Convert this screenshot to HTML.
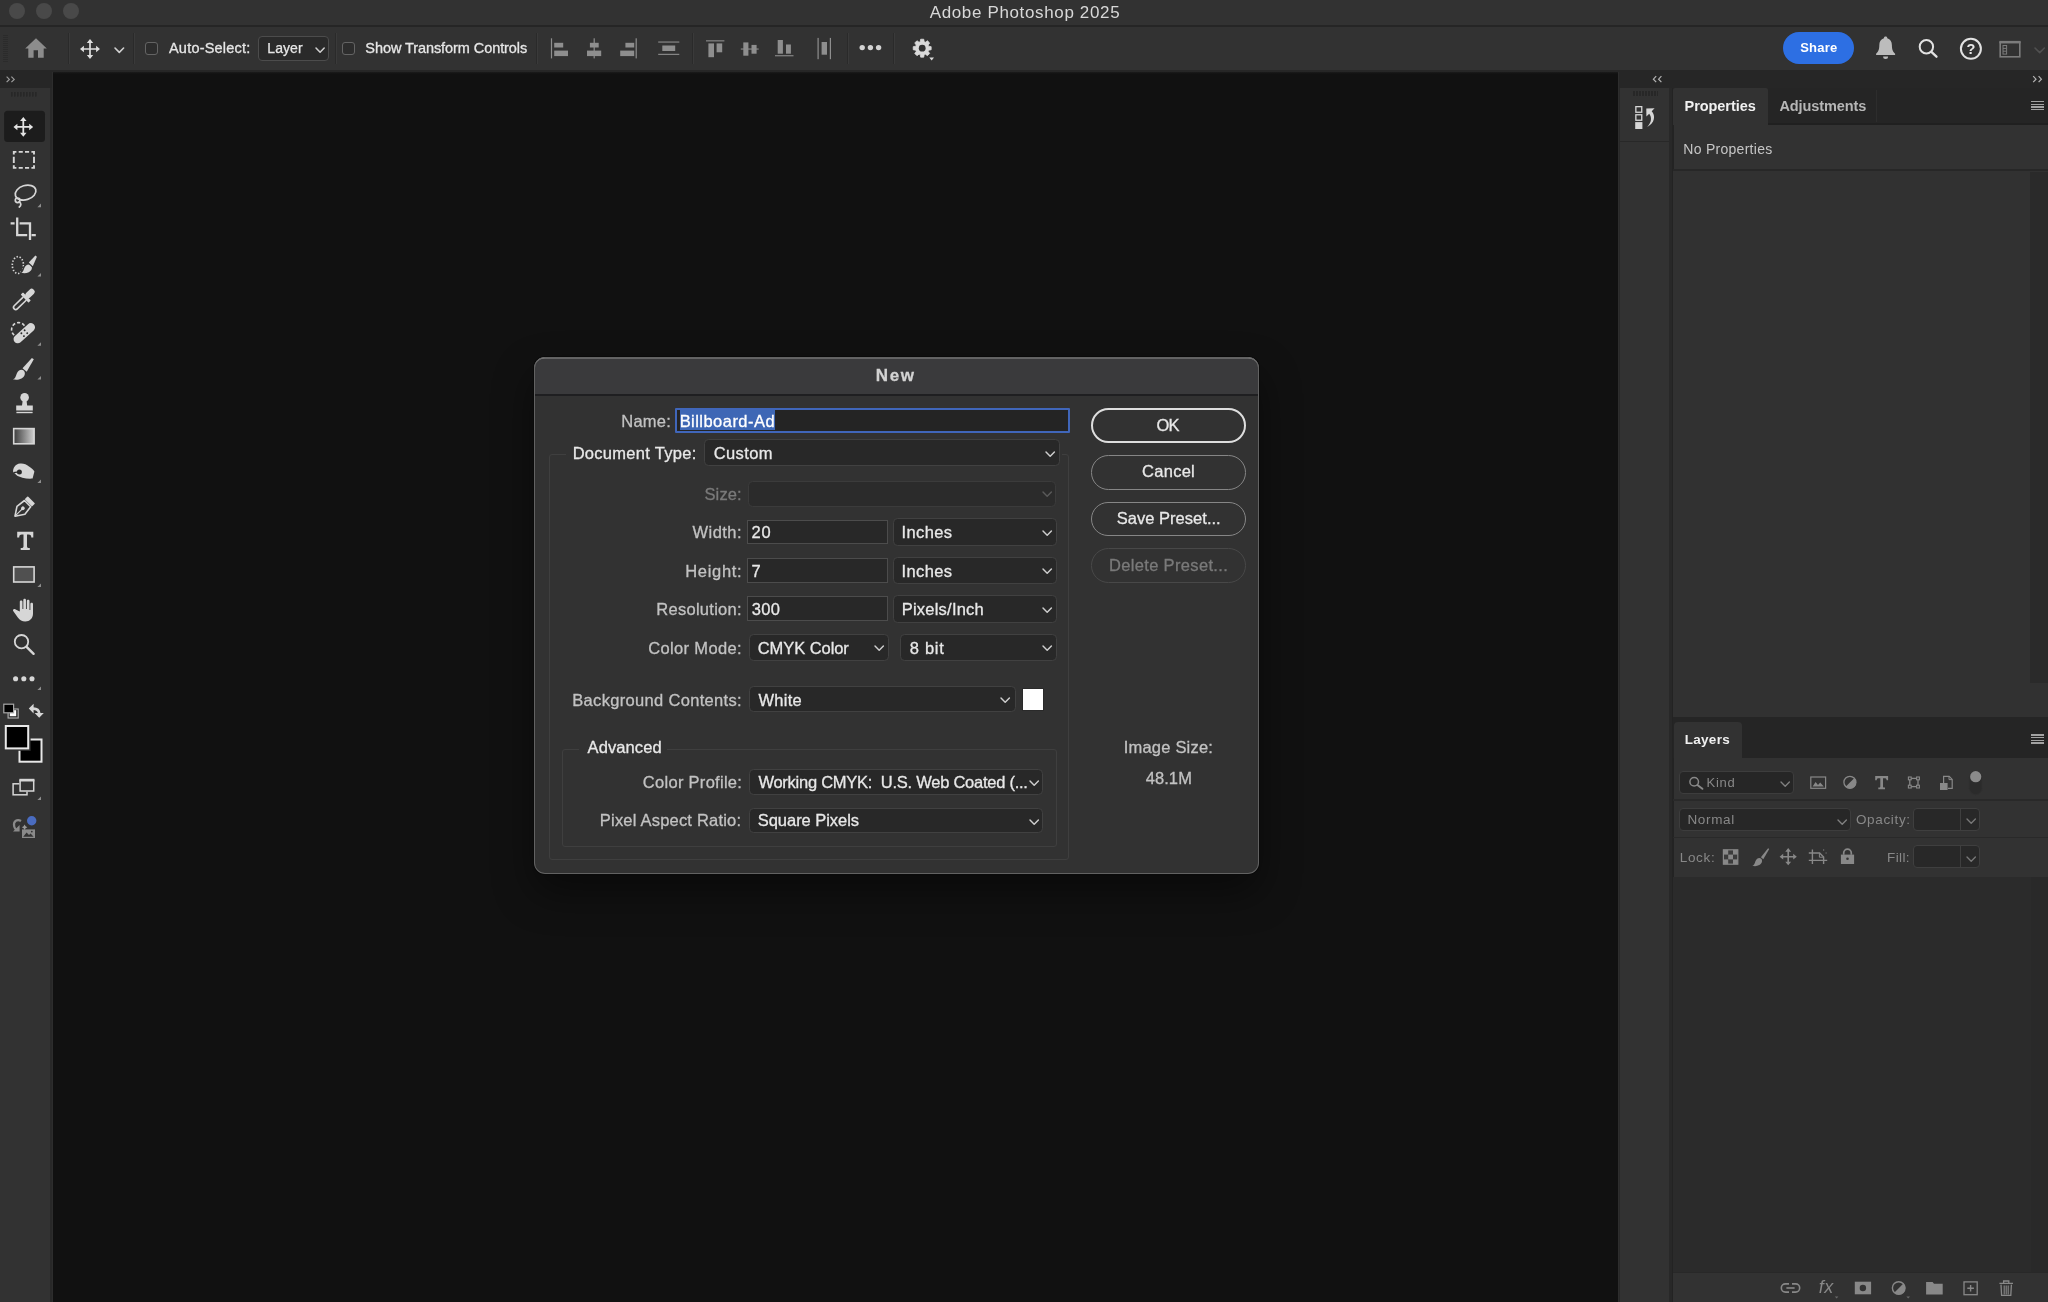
<!DOCTYPE html>
<html>
<head>
<meta charset="utf-8">
<title>Adobe Photoshop 2025</title>
<style>
*{box-sizing:border-box;margin:0;padding:0}
html,body{width:2048px;height:1302px;overflow:hidden;background:#111111;font-family:"Liberation Sans",sans-serif;}
.a{position:absolute}
.t{position:absolute;white-space:pre}
svg{position:absolute;overflow:visible}
#txt{position:absolute;left:0;top:0;width:2048px;height:1302px;will-change:transform}
#app{position:absolute;left:0;top:0;width:2048px;height:1302px;overflow:hidden;background:#111111}
</style>
</head>
<body>
<div id="app">
<div class="a" style="left:0px;top:0px;width:2048.00px;height:24.60px;background:#323232;"></div>
<div class="a" style="left:0px;top:24.6px;width:2048.00px;height:2.00px;background:#252525;"></div>
<div class="a" style="left:0px;top:26.6px;width:2048.00px;height:43.40px;background:#323232;"></div>
<div class="a" style="left:0px;top:70px;width:2048.00px;height:2.00px;background:#262626;"></div>
<div class="a" style="left:9px;top:2.5px;width:16.00px;height:16.00px;background:#494949;border-radius:8px;"></div>
<div class="a" style="left:36px;top:2.5px;width:16.00px;height:16.00px;background:#494949;border-radius:8px;"></div>
<div class="a" style="left:62.5px;top:2.5px;width:16.00px;height:16.00px;background:#494949;border-radius:8px;"></div>
<div class="a" style="left:53px;top:72px;width:1564.70px;height:1.50px;background:linear-gradient(#1b1b1b,#111111);"></div>
<div class="a" style="left:0px;top:72px;width:51.80px;height:16.00px;background:#262626;"></div>
<div class="a" style="left:0px;top:88px;width:49.80px;height:1214.00px;background:#323232;"></div>
<div class="a" style="left:49.8px;top:88px;width:2.00px;height:1214.00px;background:#282828;"></div>
<div class="a" style="left:51.8px;top:72px;width:1.20px;height:1230.00px;background:#2d2d2d;"></div>
<div class="a" style="left:1617.7px;top:72px;width:1.30px;height:1230.00px;background:#2d2d2d;"></div>
<div class="a" style="left:1619px;top:72px;width:429.00px;height:16.00px;background:#262626;"></div>
<div class="a" style="left:1619px;top:88px;width:1.30px;height:1214.00px;background:#282828;"></div>
<div class="a" style="left:1620.3px;top:88px;width:48.70px;height:1214.00px;background:#323232;"></div>
<div class="a" style="left:1669px;top:88px;width:4.60px;height:1214.00px;background:#282828;"></div>
<div class="a" style="left:1672px;top:88px;width:1.50px;height:1214.00px;background:#232323;"></div>
<div class="a" style="left:1673.5px;top:88px;width:374.50px;height:1214.00px;background:#323232;"></div>
<div class="a" style="left:3px;top:35px;width:5px;height:28px;background:repeating-linear-gradient(to bottom,#2a2a2a 0,#2a2a2a 1px,transparent 1px,transparent 2px);opacity:.9"></div>
<div class="a" style="left:68px;top:33px;width:1.00px;height:31.00px;background:#2a2a2a;"></div>
<div class="a" style="left:69px;top:33px;width:1.00px;height:31.00px;background:#3a3a3a;"></div>
<div class="a" style="left:132.5px;top:33px;width:1.00px;height:31.00px;background:#2a2a2a;"></div>
<div class="a" style="left:133.5px;top:33px;width:1.00px;height:31.00px;background:#3a3a3a;"></div>
<div class="a" style="left:335px;top:33px;width:1.00px;height:31.00px;background:#2a2a2a;"></div>
<div class="a" style="left:336px;top:33px;width:1.00px;height:31.00px;background:#3a3a3a;"></div>
<div class="a" style="left:536px;top:33px;width:1.00px;height:31.00px;background:#2a2a2a;"></div>
<div class="a" style="left:537px;top:33px;width:1.00px;height:31.00px;background:#3a3a3a;"></div>
<div class="a" style="left:691.5px;top:33px;width:1.00px;height:31.00px;background:#2a2a2a;"></div>
<div class="a" style="left:692.5px;top:33px;width:1.00px;height:31.00px;background:#3a3a3a;"></div>
<div class="a" style="left:846.5px;top:33px;width:1.00px;height:31.00px;background:#2a2a2a;"></div>
<div class="a" style="left:847.5px;top:33px;width:1.00px;height:31.00px;background:#3a3a3a;"></div>
<div class="a" style="left:893px;top:33px;width:1.00px;height:31.00px;background:#2a2a2a;"></div>
<div class="a" style="left:894px;top:33px;width:1.00px;height:31.00px;background:#3a3a3a;"></div>
<svg style="left:24px;top:37px;" width="24" height="22" viewBox="0 0 24 22"><path d="M12 1.3 L1.2 11.6 H4.3 V20.8 H9.6 V13.3 H14 V20.8 H19.7 V11.6 H22.8 Z" fill="#8c8c8c"/></svg>
<svg style="left:79.7px;top:38.5px;" width="20" height="20" viewBox="0 0 20 20"><g fill="none" stroke="#dedede" stroke-width="1.7" stroke-linecap="butt"><path d="M10 2.5 V17.5 M2.5 10 H17.5"/></g><path d="M10 0 L13.2 3.9 H6.8 Z M10 20 L13.2 16.1 H6.8 Z M0 10 L3.9 6.8 V13.2 Z M20 10 L16.1 6.8 V13.2 Z" fill="#dedede"/></svg>
<svg style="left:112.9px;top:46.1px;" width="12.6" height="8.4" viewBox="0 0 12.6 8.4"><path d="M2 2 L6.3 6.4 L10.6 2" fill="none" stroke="#d0d0d0" stroke-width="1.6" stroke-linecap="round" stroke-linejoin="round"/></svg>
<div class="a" style="left:144.8px;top:42px;width:13.30px;height:12.80px;background:#2d2d2d;border:1.4px solid #646464;border-radius:3px;"></div>
<div class="a" style="left:341.9px;top:42px;width:13.30px;height:12.80px;background:#2d2d2d;border:1.4px solid #646464;border-radius:3px;"></div>
<div class="a" style="left:257.6px;top:35.8px;width:71.80px;height:25.20px;background:#2a2a2a;border:1px solid #4c4c4c;border-radius:4px;"></div>
<svg style="left:313.6px;top:45.7px;" width="12.2" height="8.2" viewBox="0 0 12.2 8.2"><path d="M2 2 L6.1 6.2 L10.2 2" fill="none" stroke="#d0d0d0" stroke-width="1.5" stroke-linecap="round" stroke-linejoin="round"/></svg>
<svg style="left:0px;top:0px;" width="2048" height="72" viewBox="0 0 2048 72"><rect x="550.9" y="38.3" width="1.2" height="20.1" fill="#8e8e8e"/><rect x="554.2" y="42.8" width="9.0" height="4.7" fill="#8e8e8e"/><rect x="554.2" y="50.6" width="13.8" height="5.5" fill="#8e8e8e"/><rect x="593.6" y="38.3" width="1.2" height="20.1" fill="#8e8e8e"/><rect x="589.9" y="42.8" width="8.8" height="4.7" fill="#8e8e8e"/><rect x="587.0" y="50.6" width="14.2" height="5.5" fill="#8e8e8e"/><rect x="635.6" y="38.3" width="1.2" height="20.1" fill="#8e8e8e"/><rect x="625.4" y="42.8" width="8.8" height="4.7" fill="#8e8e8e"/><rect x="620.2" y="50.6" width="14.0" height="5.5" fill="#8e8e8e"/><rect x="658.2" y="41.5" width="21.1" height="1.1" fill="#8e8e8e"/><rect x="658.2" y="53.8" width="21.1" height="1.1" fill="#8e8e8e"/><rect x="662.3" y="45.5" width="12.9" height="5.5" fill="#8e8e8e"/><rect x="706.0" y="40.3" width="18.4" height="1.1" fill="#8e8e8e"/><rect x="708.4" y="43.4" width="5.6" height="13.8" fill="#8e8e8e"/><rect x="716.6" y="43.4" width="5.6" height="8.9" fill="#8e8e8e"/><rect x="740.8" y="48.5" width="17.9" height="1.1" fill="#8e8e8e"/><rect x="743.3" y="42.4" width="5.1" height="13.3" fill="#8e8e8e"/><rect x="751.5" y="44.9" width="5.1" height="8.8" fill="#8e8e8e"/><rect x="775.0" y="55.2" width="18.5" height="1.1" fill="#8e8e8e"/><rect x="777.7" y="40.0" width="5.2" height="13.7" fill="#8e8e8e"/><rect x="786.0" y="44.5" width="4.9" height="9.2" fill="#8e8e8e"/><rect x="817.5" y="37.9" width="1.2" height="21.3" fill="#8e8e8e"/><rect x="829.8" y="37.9" width="1.2" height="21.3" fill="#8e8e8e"/><rect x="821.6" y="42.0" width="5.4" height="12.7" fill="#8e8e8e"/></svg>
<svg style="left:0px;top:0px;" width="2048" height="72" viewBox="0 0 2048 72"><circle cx="862.2" cy="47.6" r="2.7" fill="#d2d2d2"/><circle cx="870.4" cy="47.6" r="2.7" fill="#d2d2d2"/><circle cx="878.6" cy="47.6" r="2.7" fill="#d2d2d2"/></svg>
<svg style="left:0px;top:0px;" width="2048" height="72" viewBox="0 0 2048 72"><path d="M920.66 39.23 L923.74 39.23 L924.18 41.80 L925.33 42.27 L927.45 40.77 L929.63 42.95 L928.13 45.07 L928.60 46.22 L931.17 46.66 L931.17 49.74 L928.60 50.18 L928.13 51.33 L929.63 53.45 L927.45 55.63 L925.33 54.13 L924.18 54.60 L923.74 57.17 L920.66 57.17 L920.22 54.60 L919.07 54.13 L916.95 55.63 L914.77 53.45 L916.27 51.33 L915.80 50.18 L913.23 49.74 L913.23 46.66 L915.80 46.22 L916.27 45.07 L914.77 42.95 L916.95 40.77 L919.07 42.27 L920.22 41.80 Z" fill="#dadada" stroke="#dadada" stroke-width="0.8" stroke-linejoin="round"/><circle cx="922.2" cy="48.2" r="3.4" fill="#323232"/><path d="M929.3 57.6 H934 L931.65 60.4 Z" fill="#dadada"/></svg>
<div class="a" style="left:1782.9px;top:32.2px;width:71.40px;height:31.80px;background:#2d6fe3;border-radius:16px;"></div>
<svg style="left:1874px;top:35px;" width="24" height="27" viewBox="0 0 24 27"><path d="M11.6 1.6 c1 0 1.7 .7 1.7 1.7 c3 .9 4.6 3.6 4.6 7 c0 4.6 1.2 6.6 3.2 8.4 v1.3 H2.1 v-1.3 c2-1.8 3.2-3.8 3.2-8.4 c0-3.4 1.6-6.1 4.6-7 c0-1 .7-1.7 1.7-1.7 Z" fill="#bcbcbc"/><path d="M9.1 21.6 h5 a2.5 2.5 0 0 1 -5 0 Z" fill="#bcbcbc"/></svg>
<svg style="left:1915px;top:36px;" width="26" height="26" viewBox="0 0 26 26"><circle cx="11.4" cy="10.8" r="6.7" fill="none" stroke="#e2e2e2" stroke-width="2"/><path d="M16.4 15.9 L21.5 20.7" stroke="#e2e2e2" stroke-width="2.3" stroke-linecap="round"/></svg>
<svg style="left:1958px;top:36px;" width="26" height="26" viewBox="0 0 26 26"><circle cx="12.9" cy="12.8" r="10" fill="none" stroke="#e2e2e2" stroke-width="2"/></svg>
<svg style="left:1998px;top:39px;" width="26" height="22" viewBox="0 0 26 22"><rect x="2.2" y="3.4" width="19.6" height="14.4" fill="none" stroke="#7c7c7c" stroke-width="1.6"/><rect x="1.4" y="1.9" width="21.2" height="2.4" fill="#7c7c7c"/><rect x="5" y="6.5" width="3.6" height="8.6" fill="none" stroke="#7c7c7c" stroke-width="1"/><path d="M5 9.4h3.6M5 12.2h3.6" stroke="#7c7c7c" stroke-width="1"/></svg>
<svg style="left:2032.5px;top:45.9px;" width="13.4" height="8.6" viewBox="0 0 13.4 8.6"><path d="M2 2 L6.7 6.6 L11.4 2" fill="none" stroke="#505050" stroke-width="1.6" stroke-linecap="round" stroke-linejoin="round"/></svg>
<svg style="left:0px;top:0px;" width="54" height="900" viewBox="0 0 54 900"><path d="M6.6 76.6 L9.4 79.4 L6.6 82.2 M11.4 76.6 L14.2 79.4 L11.4 82.2" fill="none" stroke="#9c9c9c" stroke-width="1.2"/><rect x="11" y="92" width="1.6" height="4.6" fill="#272727"/><rect x="14" y="92" width="1.6" height="4.6" fill="#272727"/><rect x="17" y="92" width="1.6" height="4.6" fill="#272727"/><rect x="20" y="92" width="1.6" height="4.6" fill="#272727"/><rect x="23" y="92" width="1.6" height="4.6" fill="#272727"/><rect x="26" y="92" width="1.6" height="4.6" fill="#272727"/><rect x="29" y="92" width="1.6" height="4.6" fill="#272727"/><rect x="32" y="92" width="1.6" height="4.6" fill="#272727"/><rect x="35" y="92" width="1.6" height="4.6" fill="#272727"/><rect x="4.1" y="110.7" width="40.9" height="31.2" rx="3.5" fill="#1c1c1c"/><g transform="translate(13.450000000000001,117.05000000000001) scale(0.985)"><path d="M10 2.5 V17.5 M2.5 10 H17.5" fill="none" stroke="#e4e4e4" stroke-width="1.8"/><path d="M10 0 L13.3 4 H6.7 Z M10 20 L13.3 16 H6.7 Z M0 10 L4 6.7 V13.3 Z M20 10 L16 6.7 V13.3 Z" fill="#e4e4e4"/></g><path d="M16.400000000000002 151.9 H13.8 V154.5 M31.4 151.9 H34.0 V154.5 M16.400000000000002 167.9 H13.8 V165.3 M31.4 167.9 H34.0 V165.3 M18.700000000000003 151.9 H22.8 M25.0 151.9 H29.1 M18.700000000000003 167.9 H22.8 M25.0 167.9 H29.1 M13.8 156.8 V163.0 M34.0 156.8 V163.0 " fill="none" stroke="#d6d6d6" stroke-width="1.9"/><g fill="none" stroke="#d6d6d6" stroke-width="1.7" stroke-linecap="round"><ellipse cx="25.6" cy="192.6" rx="10.6" ry="7.1" transform="rotate(-17 25.6 192.6)"/><circle cx="17.6" cy="200.3" r="2.3"/><path d="M19.4 201.8 C21.3 203.3 21.3 205.6 19.3 207"/></g><path d="M41 203.6 V207.2 H37.4 Z" fill="#8e8e8e"/><path d="M17.2 217.6 V235.2 H27.2 M31.6 235.2 H35.8 M10.6 223.4 H14.6 M19.6 223.4 H30 V240" fill="none" stroke="#d6d6d6" stroke-width="2.3"/><ellipse cx="17.9" cy="265.1" rx="5.6" ry="8.4" fill="none" stroke="#d6d6d6" stroke-width="1.7" stroke-dasharray="1.4 1.75"/><g transform="translate(21.2 272.8)"><path d="M0 0 C1.6 -0.4 2.2 -2.2 3 -4.6 C4.2 -7.8 7.4 -9.4 9.6 -7.6 C11.8 -5.4 10.6 -2.2 7.6 -0.6 C5 0.7 2.2 0.5 0 0 Z" fill="#323232" stroke="#323232" stroke-width="3"/><path d="M0 0 C1.6 -0.4 2.2 -2.2 3 -4.6 C4.2 -7.8 7.4 -9.4 9.6 -7.6 C11.8 -5.4 10.6 -2.2 7.6 -0.6 C5 0.7 2.2 0.5 0 0 Z" fill="#d6d6d6"/><path d="M7.8 -10 L14.2 -17.2 L15.6 -16 L11.4 -6.8 Z" fill="#323232" stroke="#323232" stroke-width="2.4"/><path d="M7.6 -10.2 L14.2 -17.4 L15.7 -16.1 L11.6 -6.6 Z" fill="#d6d6d6"/></g><path d="M41 273 V276.6 H37.4 Z" fill="#8e8e8e"/><g transform="translate(14.2 308.9) rotate(-44.5)"><path d="M15 -2.2 H2.2 A2.2 2.2 0 0 0 2.2 2.2 H15" fill="none" stroke="#d6d6d6" stroke-width="1.6"/><rect x="14.6" y="-5.6" width="3.2" height="11.2" rx="0.6" fill="#d6d6d6"/><rect x="17" y="-3" width="10.4" height="6" rx="2.6" fill="#d6d6d6"/></g><circle cx="18.6" cy="329.6" r="7" fill="none" stroke="#d6d6d6" stroke-width="1.6" stroke-dasharray="3.2 2"/><g transform="translate(24.3 333.2) rotate(-42)"><rect x="-14" y="-5.2" width="28" height="10.4" rx="5.2" fill="#323232"/><rect x="-13" y="-4.2" width="26" height="8.4" rx="4.2" fill="#d6d6d6"/><circle cx="-2.2" cy="-1.9" r="0.95" fill="#2a2a2a"/><circle cx="-2.2" cy="1.9" r="0.95" fill="#2a2a2a"/><circle cx="2.2" cy="-1.9" r="0.95" fill="#2a2a2a"/><circle cx="2.2" cy="1.9" r="0.95" fill="#2a2a2a"/></g><path d="M41 342.2 V345.8 H37.4 Z" fill="#8e8e8e"/><g transform="translate(12.9 379.3)"><path d="M0 0 C2.2 -0.4 2.8 -2.8 3.8 -5.6 C5.2 -9.4 8.8 -10.8 11 -8.6 C13 -6.2 11.8 -2.4 8.6 -0.8 C5.6 0.7 2.4 0.6 0 0 Z" fill="#d6d6d6"/><path d="M9.6 -11 L19 -21.4 L20.9 -20 L13.8 -7.6 Z" fill="#d6d6d6"/></g><path d="M41 376 V379.6 H37.4 Z" fill="#8e8e8e"/><circle cx="24.6" cy="397.4" r="4.3" fill="#d6d6d6"/><path d="M22.7 400.6 H26.5 L27.2 405.4 H32.8 V410.4 H16.2 V405.4 H22 Z" fill="#d6d6d6"/><rect x="16.4" y="411.8" width="16.2" height="1.4" fill="#d6d6d6"/><defs><linearGradient id="gr" x1="0" y1="0" x2="1" y2="0"><stop offset="0" stop-color="#3c3c3c"/><stop offset="1" stop-color="#d0d0d0"/></linearGradient></defs><rect x="13.7" y="428.6" width="20.4" height="15.2" fill="url(#gr)" stroke="#d6d6d6" stroke-width="1.6"/><path d="M13.2 472.4 C12.6 468 15.6 464 20 463.6 C23.6 463.2 26.4 464.6 29 466.4 C31.6 468.2 33.6 469.6 34.4 471.6 L32.6 478.6 C29 478.8 25.6 478.6 22.4 477.8 C18.6 476.8 16 475.4 15 473.6 Z" fill="#d6d6d6"/><circle cx="19.4" cy="471.9" r="2.5" fill="#2a2a2a"/><path d="M13.4 472.6 L17 472.2" stroke="#2a2a2a" stroke-width="1.2"/><path d="M41 479.4 V483.0 H37.4 Z" fill="#8e8e8e"/><g transform="translate(15 516.2) rotate(-45)"><path d="M0 0 L8.4 -5.6 L17.8 -4.4 V4.4 L8.4 5.6 Z" fill="none" stroke="#d6d6d6" stroke-width="1.6" stroke-linejoin="round"/><path d="M0 0 H10" stroke="#d6d6d6" stroke-width="1.2"/><circle cx="11.2" cy="0" r="1.8" fill="#d6d6d6"/><rect x="18.8" y="-5.2" width="4.4" height="10.4" rx="0.8" fill="#d6d6d6"/></g><path d="M17.2 531.8 H33.3 V537.4 H31.3 C31.2 535.6 30.6 534.6 28.6 534.6 H27 V546.2 C27 547.6 27.6 548 29.8 548 V550 H20.7 V548 C22.9 548 23.5 547.6 23.5 546.2 V534.6 H21.9 C19.9 534.6 19.3 535.6 19.2 537.4 H17.2 Z" fill="#d6d6d6"/><rect x="13.7" y="566.9" width="20.4" height="15.1" fill="#505050" stroke="#d6d6d6" stroke-width="1.6"/><path d="M41 583.4 V587.0 H37.4 Z" fill="#8e8e8e"/><path transform="translate(24.2 0) scale(1.1 1) translate(-23.6 0)" d="M19.6 611.6 V601.6 C19.6 600 22 600 22 601.6 V609 H22.8 V600 C22.8 598.4 25.2 598.4 25.2 600 V609 H26 V601 C26 599.4 28.4 599.4 28.4 601 V610 H29.2 V604 C29.2 602.4 31.6 602.4 31.6 604 V613.6 C31.6 618.4 28.6 621.6 24.6 621.6 C21.6 621.6 19.6 620.4 17.8 617.6 L13.6 611 C12.8 609.6 14.6 608.4 15.8 609.6 Z" fill="#d6d6d6"/><circle cx="21.5" cy="641.7" r="6.7" fill="none" stroke="#d6d6d6" stroke-width="1.8"/><path d="M26.6 646.8 L33.6 653.8" stroke="#d6d6d6" stroke-width="2.4" stroke-linecap="round"/><circle cx="15.6" cy="678.8" r="2.55" fill="#d6d6d6"/><circle cx="23.8" cy="678.8" r="2.55" fill="#d6d6d6"/><circle cx="32" cy="678.8" r="2.55" fill="#d6d6d6"/><path d="M41 686.4 V690.0 H37.4 Z" fill="#8e8e8e"/><rect x="8.1" y="709" width="10.1" height="9" fill="#2a2a2a" stroke="#a8a8a8" stroke-width="1.2"/><rect x="9.8" y="710.2" width="6.4" height="6" fill="#ffffff"/><rect x="3.8" y="704.2" width="9.8" height="8.6" fill="#000" stroke="#a8a8a8" stroke-width="1.2"/><path d="M32.4 708.6 C36.6 708.4 39 710 39.2 713.4" fill="none" stroke="#d6d6d6" stroke-width="2.6"/><path d="M28.8 708.6 L33.6 703.8 V713.4 Z M39.2 717.8 L34.6 713 H43.8 Z" fill="#d6d6d6"/><rect x="19.5" y="739.5" width="22" height="22.2" fill="#000" stroke="#e8e8e8" stroke-width="2"/><rect x="3.4" y="723.6" width="27.2" height="27.2" fill="#323232"/><rect x="5.8" y="726" width="22.4" height="22.4" fill="#000" stroke="#e8e8e8" stroke-width="2"/><rect x="13.1" y="783.8" width="13.9" height="11" fill="none" stroke="#d6d6d6" stroke-width="1.5"/><rect x="19.4" y="778.8" width="15" height="12.9" fill="#323232"/><rect x="20.1" y="780.4" width="13.6" height="10.6" fill="none" stroke="#d6d6d6" stroke-width="1.5"/><rect x="19.4" y="778.8" width="15" height="2.6" fill="#d6d6d6"/><path d="M41 796.4 V800.0 H37.4 Z" fill="#8e8e8e"/><path d="M21 821 C17 818.4 13 821.6 14.2 826.4 C14.6 828 15.4 829.2 16.6 830" fill="none" stroke="#8a8a8a" stroke-width="2.2"/><path d="M13 831.4 H19.6 V825 Z" fill="#8a8a8a"/><rect x="22" y="829.4" width="13" height="8.6" fill="#8a8a8a"/><path d="M23.2 836.8 L26.6 832.4 L29 835 L30.6 833.6 L33.6 836.8 Z" fill="#323232"/><circle cx="31.8" cy="831.6" r="0.9" fill="#323232"/><circle cx="31.7" cy="820.8" r="4.7" fill="#4a6cc0"/><path d="M24.6 824.4 l1 1.8 l1.8 1 l-1.8 1 l-1 1.8 l-1 -1.8 l-1.8 -1 l1.8 -1 Z" fill="#9a9a9a"/></svg>
<div class="a" style="left:1620.3px;top:141px;width:49.70px;height:1.20px;background:#282828;"></div>
<div class="a" style="left:1633px;top:91.4px;width:25px;height:4.8px;background:repeating-linear-gradient(to right,#272727 0,#272727 1.6px,transparent 1.6px,transparent 3px)"></div>
<svg style="left:0px;top:0px;" width="2048" height="200" viewBox="0 0 2048 200"><path d="M1656.2 76.2 L1653.4 79.2 L1656.2 82.2 M1661.4 76.2 L1658.6 79.2 L1661.4 82.2" fill="none" stroke="#b4b4b4" stroke-width="1.2"/><path d="M2033.2 76.2 L2036 79.2 L2033.2 82.2 M2038.6 76.2 L2041.4 79.2 L2038.6 82.2" fill="none" stroke="#b4b4b4" stroke-width="1.2"/><rect x="1635.85" y="106.65" width="5.9" height="5.6" fill="none" stroke="#d6d6d6" stroke-width="1.3"/><rect x="1635.85" y="114.75" width="5.9" height="5.5" fill="none" stroke="#d6d6d6" stroke-width="1.3"/><rect x="1635.2" y="122.1" width="7.2" height="6.9" fill="#d6d6d6"/><path d="M1646.3 108.4 L1654.6 108.3 L1651.7 111.2 C1655.8 115.6 1654.8 123 1647.2 126.9 C1651.4 122.6 1652.2 117.6 1649.2 113.7 L1646.4 116.5 Z" fill="#d6d6d6"/></svg>
<div class="a" style="left:1673px;top:88px;width:375.00px;height:35.00px;background:#252525;"></div>
<div class="a" style="left:1673px;top:123px;width:375.00px;height:2.00px;background:#202020;"></div>
<div class="a" style="left:1673.3px;top:88px;width:94.90px;height:37.00px;background:#323232;border-radius:2px 2px 0 0;"></div>
<div class="a" style="left:1876.2px;top:90px;width:0.80px;height:32.00px;background:#2d2d2d;"></div>
<div class="a" style="left:2030.5px;top:101.0px;width:13.80px;height:1.25px;background:#a2a2a2;"></div>
<div class="a" style="left:2030.5px;top:103.67px;width:13.80px;height:1.25px;background:#a2a2a2;"></div>
<div class="a" style="left:2030.5px;top:106.34px;width:13.80px;height:1.25px;background:#a2a2a2;"></div>
<div class="a" style="left:2030.5px;top:109.01px;width:13.80px;height:1.25px;background:#a2a2a2;"></div>
<div class="a" style="left:1673px;top:169px;width:375.00px;height:1.60px;background:#272727;"></div>
<div class="a" style="left:1673px;top:170.6px;width:375.00px;height:546.70px;background:#313131;"></div>
<div class="a" style="left:2030px;top:171.6px;width:18.00px;height:511.40px;background:#2a2a2a;"></div>
<div class="a" style="left:1673px;top:717.3px;width:375.00px;height:40.70px;background:#252525;"></div>
<div class="a" style="left:1673.5px;top:722px;width:68.80px;height:36.00px;background:#323232;border-radius:4px 4px 0 0;"></div>
<div class="a" style="left:2030.5px;top:734.4px;width:13.80px;height:1.25px;background:#a2a2a2;"></div>
<div class="a" style="left:2030.5px;top:737.0699999999999px;width:13.80px;height:1.25px;background:#a2a2a2;"></div>
<div class="a" style="left:2030.5px;top:739.74px;width:13.80px;height:1.25px;background:#a2a2a2;"></div>
<div class="a" style="left:2030.5px;top:742.41px;width:13.80px;height:1.25px;background:#a2a2a2;"></div>
<div class="a" style="left:1679px;top:770.9px;width:115.00px;height:23.30px;background:#262626;border:1px solid #3d3d3d;border-radius:4px;"></div>
<svg style="left:1778.9px;top:779.8px;" width="12.4" height="8.2" viewBox="0 0 12.4 8.2"><path d="M2 2 L6.2 6.2 L10.4 2" fill="none" stroke="#808080" stroke-width="1.35" stroke-linecap="round" stroke-linejoin="round"/></svg>
<div class="a" style="left:1673px;top:799.4px;width:375.00px;height:1.40px;background:#292929;"></div>
<div class="a" style="left:1679px;top:808.2px;width:172.00px;height:22.80px;background:#272727;border:1px solid #3d3d3d;border-radius:4px;"></div>
<svg style="left:1835.9px;top:817.7px;" width="12.4" height="8.2" viewBox="0 0 12.4 8.2"><path d="M2 2 L6.2 6.2 L10.4 2" fill="none" stroke="#808080" stroke-width="1.35" stroke-linecap="round" stroke-linejoin="round"/></svg>
<div class="a" style="left:1673px;top:836.6px;width:375.00px;height:1.40px;background:#292929;"></div>
<div class="a" style="left:1912.7px;top:807.9px;width:67.70px;height:22.70px;background:#282828;border:1px solid #3f3f3f;border-radius:4px;"></div>
<div class="a" style="left:1960.4px;top:808.9px;width:1.00px;height:20.70px;background:#3f3f3f;"></div>
<svg style="left:1964.6px;top:817.4px;" width="12.4" height="8.2" viewBox="0 0 12.4 8.2"><path d="M2 2 L6.2 6.2 L10.4 2" fill="none" stroke="#787878" stroke-width="1.35" stroke-linecap="round" stroke-linejoin="round"/></svg>
<div class="a" style="left:1912.7px;top:845.3px;width:67.70px;height:22.30px;background:#282828;border:1px solid #3f3f3f;border-radius:4px;"></div>
<div class="a" style="left:1960.4px;top:846.3px;width:1.00px;height:20.30px;background:#3f3f3f;"></div>
<svg style="left:1964.6px;top:854.9px;" width="12.4" height="8.2" viewBox="0 0 12.4 8.2"><path d="M2 2 L6.2 6.2 L10.4 2" fill="none" stroke="#787878" stroke-width="1.35" stroke-linecap="round" stroke-linejoin="round"/></svg>
<div class="a" style="left:1673px;top:877.4px;width:375.00px;height:394.60px;background:#2b2b2b;"></div>
<div class="a" style="left:2030.5px;top:877.4px;width:17.50px;height:394.60px;background:#292929;"></div>
<div class="a" style="left:1673px;top:1271.6px;width:375.00px;height:1.40px;background:#282828;"></div>
<svg style="left:0px;top:700px;" width="2048" height="200" viewBox="0 700 2048 200"><circle cx="1694.2" cy="781.8" r="4.3" fill="none" stroke="#888888" stroke-width="1.5"/><path d="M1697.4 785 L1702.4 788.8" stroke="#888888" stroke-width="2" stroke-linecap="round"/><rect x="1810.8" y="777" width="14.8" height="11.3" fill="none" stroke="#888888" stroke-width="1.2"/><path d="M1812.6 786.6 L1815.6 782 L1818 785 L1820.2 782.4 L1823.8 786.6 Z" fill="#888888"/><circle cx="1849.9" cy="782.3" r="6" fill="none" stroke="#888888" stroke-width="1.3"/><path d="M1854.4 778 A6.2 6.2 0 0 1 1845.6 786.8 Z" fill="#888888"/><path d="M1875.2 776 H1888.1 V780.2 H1886.6 C1886.5 778.6 1886 778.2 1884.6 778.2 H1883 V786.4 C1883 787.4 1883.4 787.6 1885 787.6 V789.2 H1878.3 V787.6 C1879.9 787.6 1880.3 787.4 1880.3 786.4 V778.2 H1878.7 C1877.3 778.2 1876.8 778.6 1876.7 780.2 H1875.2 Z" fill="#888888"/><rect x="1909.8" y="778.4" width="8.2" height="8.2" fill="none" stroke="#888888" stroke-width="1.3"/><rect x="1908.4" y="777" width="2.8" height="2.8" fill="#323232" stroke="#888888" stroke-width="1.1"/><rect x="1908.4" y="785.2" width="2.8" height="2.8" fill="#323232" stroke="#888888" stroke-width="1.1"/><rect x="1916.6" y="777" width="2.8" height="2.8" fill="#323232" stroke="#888888" stroke-width="1.1"/><rect x="1916.6" y="785.2" width="2.8" height="2.8" fill="#323232" stroke="#888888" stroke-width="1.1"/><path d="M1943.6 783 V776.3 H1949.2 L1952.2 779.4 V788.4 H1948" fill="none" stroke="#888888" stroke-width="1.2"/><path d="M1949 776.4 V779.6 H1952" fill="none" stroke="#888888" stroke-width="1"/><rect x="1940" y="783" width="7.6" height="7" fill="#888888"/><rect x="1969.4" y="771.2" width="12.6" height="23.4" rx="6.3" fill="#2b2b2b" stroke="#303030" stroke-width="1"/><circle cx="1975.7" cy="776.7" r="5.6" fill="#8a8a8a"/><rect x="1723.4" y="849.8" width="14.4" height="14.4" fill="#3c3c3c" stroke="#888888" stroke-width="1.2"/><rect x="1723.40" y="849.80" width="4.80" height="4.80" fill="#888888"/><rect x="1723.40" y="859.40" width="4.80" height="4.80" fill="#888888"/><rect x="1728.20" y="854.60" width="4.80" height="4.80" fill="#888888"/><rect x="1733.00" y="849.80" width="4.80" height="4.80" fill="#888888"/><rect x="1733.00" y="859.40" width="4.80" height="4.80" fill="#888888"/><g transform="translate(1752.3 865.8)"><path d="M0 0 C1.8 -0.3 2.3 -2.3 3.1 -4.6 C4.3 -7.6 7.2 -8.8 9 -7 C10.6 -5 9.6 -2 7 -0.7 C4.6 0.6 2 0.5 0 0 Z" fill="#888888"/><path d="M8.6 -8.6 L15.8 -17.6 L16.9 -16.9 L11 -6.6 Z" fill="#888888"/></g><g transform="translate(1779.6 848.1) scale(0.86)"><path d="M10 2.5 V17.5 M2.5 10 H17.5" fill="none" stroke="#888888" stroke-width="1.9"/><path d="M10 0 L13.4 4.2 H6.6 Z M10 20 L13.4 15.8 H6.6 Z M0 10 L4.2 6.6 V13.4 Z M20 10 L15.8 6.6 V13.4 Z" fill="#888888"/></g><path d="M1812.4 849.4 V864 M1808.8 853 H1819.6 L1823.6 857 V864 M1808.8 860.4 H1827.2" fill="none" stroke="#888888" stroke-width="1.4"/><path d="M1819.4 853.2 V857.2 H1823.4" fill="none" stroke="#888888" stroke-width="1"/><path d="M1823.6 849.4 V851.4 M1825.6 853 H1827.4" stroke="#888888" stroke-width="1.2" stroke-dasharray="1 1"/><rect x="1840.9" y="854.6" width="13.2" height="9.4" fill="#888888"/><path d="M1843.7 854.8 V853 A3.8 3.8 0 0 1 1851.3 853 V854.8" fill="none" stroke="#888888" stroke-width="1.7"/><circle cx="1847.5" cy="858.8" r="1.3" fill="#323232"/></svg>
<div class="a" style="left:1673px;top:1273px;width:375.00px;height:29.00px;background:#323232;"></div>
<svg style="left:0px;top:1250px;" width="2048" height="52" viewBox="0 1250 2048 52"><path d="M1789 1283.9 H1785.4 A4.1 4.1 0 0 0 1785.4 1292.1 H1789 M1792 1283.9 H1795.6 A4.1 4.1 0 0 1 1795.6 1292.1 H1792" fill="none" stroke="#888888" stroke-width="1.6"/><path d="M1786.4 1288 H1794.6" stroke="#888888" stroke-width="1.6"/><rect x="1854.8" y="1281.7" width="16.3" height="12.6" fill="#888888"/><circle cx="1862.9" cy="1288" r="3.2" fill="#323232"/><circle cx="1898.7" cy="1288" r="6.3" fill="none" stroke="#888888" stroke-width="1.4"/><path d="M1903.4 1283.5 A6.5 6.5 0 0 1 1894.2 1292.7 Z" fill="#888888"/><path d="M1906.4 1296.6 H1910 L1908.2 1298.4 Z" fill="#6a6a6a"/><path d="M1834.8 1296.6 H1838.4 L1836.6 1298.4 Z" fill="#6a6a6a"/><path d="M1926.1 1282 H1932.6 L1934 1283.8 H1942.7 V1294.6 H1926.1 Z" fill="#888888"/><rect x="1964" y="1281.9" width="13.2" height="12.8" fill="none" stroke="#888888" stroke-width="1.3"/><path d="M1970.6 1285 V1291.6 M1967.3 1288.3 H1973.9" stroke="#888888" stroke-width="1.4"/><path d="M1999.4 1283.4 H2013 M2003.6 1283 V1281 H2008.8 V1283" fill="none" stroke="#888888" stroke-width="1.3"/><path d="M2001 1284.6 L2001.6 1295.4 H2010.8 L2011.4 1284.6" fill="none" stroke="#888888" stroke-width="1.3"/><path d="M2004.2 1285.4 V1294.4 M2006.2 1285.4 V1294.4 M2008.2 1285.4 V1294.4" stroke="#888888" stroke-width="1.1"/></svg>
<div class="a" style="left:534px;top:357px;width:725px;height:517px;border-radius:11px;background:#323232;box-shadow:0 0 0 1px #0a0a0a, 0 18px 40px rgba(0,0,0,.45);overflow:hidden"><div class="a" style="left:0;top:0;width:725px;height:37px;background:#3a3a3c"></div><div class="a" style="left:0;top:36.9px;width:725px;height:1.7px;background:#1f1f21"></div><div class="a" style="left:0;top:0;width:725px;height:517px;border-radius:11px;box-shadow:0 0 0 1px #626262 inset, 0 1.4px 0 0 #8e8e8e inset"></div></div>
<div class="a" style="left:548.5px;top:453.5px;width:520.50px;height:406.00px;border:1px solid #3f3f3f;border-radius:3px;"></div>
<div class="a" style="left:566px;top:450px;width:496.00px;height:8.00px;background:#323232;"></div>
<div class="a" style="left:561.5px;top:748.5px;width:495.00px;height:98.00px;border:1px solid #3f3f3f;border-radius:3px;"></div>
<div class="a" style="left:579px;top:744px;width:88.00px;height:10.00px;background:#323232;"></div>
<div class="a" style="left:674.8px;top:408.2px;width:395.40px;height:24.70px;background:#242424;border:2px solid #4066ba;border-radius:1px;"></div>
<div class="a" style="left:679.5px;top:410.3px;width:95.00px;height:20.20px;background:#3e67b5;"></div>
<div class="a" style="left:704.2px;top:438.8px;width:355.80px;height:27.40px;background:#282828;border:1px solid #414141;border-radius:4.5px;"></div>
<svg style="left:1044.1px;top:449.85px;" width="12.4" height="8.3" viewBox="0 0 12.4 8.3"><path d="M2 2 L6.2 6.3 L10.4 2" fill="none" stroke="#cecece" stroke-width="1.45" stroke-linecap="round" stroke-linejoin="round"/></svg>
<div class="a" style="left:748.4px;top:480.8px;width:308.10px;height:25.90px;background:#2b2b2b;border:1px solid #3b3b3b;border-radius:4.5px;"></div>
<svg style="left:1040.8px;top:490.35px;" width="12.4" height="8.3" viewBox="0 0 12.4 8.3"><path d="M2 2 L6.2 6.3 L10.4 2" fill="none" stroke="#5a5a5a" stroke-width="1.45" stroke-linecap="round" stroke-linejoin="round"/></svg>
<div class="a" style="left:746.6px;top:519.8px;width:141.00px;height:24.40px;background:#282828;border:1.2px solid #4c4c4c;"></div>
<div class="a" style="left:893px;top:518.3px;width:163.80px;height:27.50px;background:#282828;border:1px solid #414141;border-radius:4.5px;"></div>
<svg style="left:1040.8px;top:528.85px;" width="12.4" height="8.3" viewBox="0 0 12.4 8.3"><path d="M2 2 L6.2 6.3 L10.4 2" fill="none" stroke="#cecece" stroke-width="1.45" stroke-linecap="round" stroke-linejoin="round"/></svg>
<div class="a" style="left:746.6px;top:558.4px;width:141.00px;height:24.20px;background:#282828;border:1.2px solid #4c4c4c;"></div>
<div class="a" style="left:893px;top:556.8px;width:163.80px;height:27.50px;background:#282828;border:1px solid #414141;border-radius:4.5px;"></div>
<svg style="left:1040.8px;top:567.35px;" width="12.4" height="8.3" viewBox="0 0 12.4 8.3"><path d="M2 2 L6.2 6.3 L10.4 2" fill="none" stroke="#cecece" stroke-width="1.45" stroke-linecap="round" stroke-linejoin="round"/></svg>
<div class="a" style="left:746.6px;top:596.4px;width:141.00px;height:24.90px;background:#282828;border:1.2px solid #4c4c4c;"></div>
<div class="a" style="left:893px;top:595.1499999999999px;width:163.80px;height:27.50px;background:#282828;border:1px solid #414141;border-radius:4.5px;"></div>
<svg style="left:1040.8px;top:605.7px;" width="12.4" height="8.3" viewBox="0 0 12.4 8.3"><path d="M2 2 L6.2 6.3 L10.4 2" fill="none" stroke="#cecece" stroke-width="1.45" stroke-linecap="round" stroke-linejoin="round"/></svg>
<div class="a" style="left:748.5px;top:634px;width:140.30px;height:26.80px;background:#282828;border:1px solid #414141;border-radius:4.5px;"></div>
<svg style="left:872.8px;top:644.25px;" width="12.4" height="8.3" viewBox="0 0 12.4 8.3"><path d="M2 2 L6.2 6.3 L10.4 2" fill="none" stroke="#cecece" stroke-width="1.45" stroke-linecap="round" stroke-linejoin="round"/></svg>
<div class="a" style="left:900.3px;top:634px;width:156.50px;height:26.80px;background:#282828;border:1px solid #414141;border-radius:4.5px;"></div>
<svg style="left:1040.8px;top:644.25px;" width="12.4" height="8.3" viewBox="0 0 12.4 8.3"><path d="M2 2 L6.2 6.3 L10.4 2" fill="none" stroke="#cecece" stroke-width="1.45" stroke-linecap="round" stroke-linejoin="round"/></svg>
<div class="a" style="left:748.5px;top:686.2px;width:267.00px;height:26.20px;background:#282828;border:1px solid #414141;border-radius:4.5px;"></div>
<svg style="left:999.3px;top:696.15px;" width="12.4" height="8.3" viewBox="0 0 12.4 8.3"><path d="M2 2 L6.2 6.3 L10.4 2" fill="none" stroke="#cecece" stroke-width="1.45" stroke-linecap="round" stroke-linejoin="round"/></svg>
<div class="a" style="left:1021.5px;top:688.3px;width:22.50px;height:22.50px;background:#ffffff;border:1px solid #2a2a2a;"></div>
<div class="a" style="left:748.6px;top:768.5px;width:294.40px;height:26.00px;background:#282828;border:1px solid #414141;border-radius:4.5px;"></div>
<svg style="left:1027.5px;top:778.95px;" width="12.4" height="8.3" viewBox="0 0 12.4 8.3"><path d="M2 2 L6.2 6.3 L10.4 2" fill="none" stroke="#cecece" stroke-width="1.45" stroke-linecap="round" stroke-linejoin="round"/></svg>
<div class="a" style="left:748.6px;top:807.6px;width:294.40px;height:25.70px;background:#282828;border:1px solid #414141;border-radius:4.5px;"></div>
<svg style="left:1027.5px;top:817.7px;" width="12.4" height="8.3" viewBox="0 0 12.4 8.3"><path d="M2 2 L6.2 6.3 L10.4 2" fill="none" stroke="#cecece" stroke-width="1.45" stroke-linecap="round" stroke-linejoin="round"/></svg>
<div class="a" style="left:1091px;top:408.3px;width:155.00px;height:34.70px;border:2px solid #dedede;border-radius:17.4px;"></div>
<div class="a" style="left:1091px;top:455px;width:155.00px;height:34.70px;border:1.6px solid #868686;border-radius:17.4px;"></div>
<div class="a" style="left:1091px;top:501.7px;width:155.00px;height:34.70px;border:1.6px solid #868686;border-radius:17.4px;"></div>
<div class="a" style="left:1091px;top:548.4px;width:155.00px;height:34.70px;border:1.6px solid #484848;border-radius:17.4px;"></div>
<div id="txt">
<div class="t" style="left:929.67px;top:4px;font-size:17px;line-height:17px;color:#d8d8d8;letter-spacing:0.644px;">Adobe Photoshop 2025</div>
<div class="t" style="left:168.97px;top:41px;font-size:14.5px;line-height:14.5px;color:#e6e6e6;letter-spacing:0.215px;-webkit-text-stroke:0.3px;">Auto-Select:</div>
<div class="t" style="left:267.25px;top:41px;font-size:14px;line-height:14px;color:#e6e6e6;letter-spacing:0.090px;-webkit-text-stroke:0.25px;">Layer</div>
<div class="t" style="left:365.34px;top:41px;font-size:14.5px;line-height:14.5px;color:#e6e6e6;letter-spacing:-0.077px;-webkit-text-stroke:0.3px;">Show Transform Controls</div>
<div class="t" style="left:1800.13px;top:41px;font-size:13px;line-height:13px;color:#ffffff;letter-spacing:0.222px;font-weight:bold;">Share</div>
<div class="t" style="left:1966.56px;top:42px;font-size:14.5px;line-height:14.5px;color:#e8e8e8;font-weight:bold;">?</div>
<div class="t" style="left:1684.53px;top:99px;font-size:14.5px;line-height:14.5px;color:#f0f0f0;letter-spacing:-0.051px;font-weight:bold;">Properties</div>
<div class="t" style="left:1779.44px;top:99px;font-size:14.5px;line-height:14.5px;color:#b6b6b6;letter-spacing:-0.096px;font-weight:bold;">Adjustments</div>
<div class="t" style="left:1683.35px;top:142px;font-size:14px;line-height:14px;color:#c6c6c6;letter-spacing:0.272px;">No Properties</div>
<div class="t" style="left:1684.80px;top:733px;font-size:13.5px;line-height:13.5px;color:#f0f0f0;letter-spacing:0.265px;font-weight:bold;">Layers</div>
<div class="t" style="left:1706.53px;top:776px;font-size:13px;line-height:13px;color:#888888;letter-spacing:0.762px;">Kind</div>
<div class="t" style="left:1687.49px;top:813px;font-size:13.5px;line-height:13.5px;color:#888888;letter-spacing:0.641px;">Normal</div>
<div class="t" style="left:1855.96px;top:813px;font-size:13.5px;line-height:13.5px;color:#888888;letter-spacing:0.651px;">Opacity:</div>
<div class="t" style="left:1679.69px;top:851px;font-size:13.5px;line-height:13.5px;color:#888888;letter-spacing:0.693px;">Lock:</div>
<div class="t" style="left:1886.99px;top:851px;font-size:13.5px;line-height:13.5px;color:#888888;letter-spacing:0.411px;">Fill:</div>
<div class="t" style="left:1818.69px;top:1278px;font-size:18px;line-height:18px;color:#888888;letter-spacing:0.578px;font-style:italic;">fx</div>
<div class="t" style="left:875.86px;top:367px;font-size:17px;line-height:17px;color:#d2d2d2;letter-spacing:1.575px;font-weight:bold;-webkit-text-stroke:0.3px;">New</div>
<div class="t" style="left:621.25px;top:413px;font-size:16.5px;line-height:16.5px;color:#c2c2c2;letter-spacing:0.241px;-webkit-text-stroke:0.3px;">Name:</div>
<div class="t" style="left:679.65px;top:413px;font-size:16.5px;line-height:16.5px;color:#ffffff;letter-spacing:0.458px;-webkit-text-stroke:0.3px;">Billboard-Ad</div>
<div class="t" style="left:572.65px;top:445px;font-size:16.5px;line-height:16.5px;color:#e8e8e8;letter-spacing:0.293px;-webkit-text-stroke:0.3px;">Document Type:</div>
<div class="t" style="left:713.76px;top:445px;font-size:16.5px;line-height:16.5px;color:#e8e8e8;letter-spacing:0.376px;-webkit-text-stroke:0.3px;">Custom</div>
<div class="t" style="left:704.45px;top:486px;font-size:16.5px;line-height:16.5px;color:#7a7a7a;letter-spacing:0.143px;-webkit-text-stroke:0.3px;">Size:</div>
<div class="t" style="left:692.43px;top:524px;font-size:16.5px;line-height:16.5px;color:#c2c2c2;letter-spacing:0.484px;-webkit-text-stroke:0.3px;">Width:</div>
<div class="t" style="left:751.57px;top:524px;font-size:16.5px;line-height:16.5px;color:#e8e8e8;letter-spacing:0.721px;-webkit-text-stroke:0.3px;">20</div>
<div class="t" style="left:901.48px;top:524px;font-size:16.5px;line-height:16.5px;color:#e8e8e8;letter-spacing:0.401px;-webkit-text-stroke:0.3px;">Inches</div>
<div class="t" style="left:685.25px;top:563px;font-size:16.5px;line-height:16.5px;color:#c2c2c2;letter-spacing:0.680px;-webkit-text-stroke:0.3px;">Height:</div>
<div class="t" style="left:751.55px;top:563px;font-size:16.5px;line-height:16.5px;color:#e8e8e8;-webkit-text-stroke:0.3px;">7</div>
<div class="t" style="left:901.48px;top:563px;font-size:16.5px;line-height:16.5px;color:#e8e8e8;letter-spacing:0.401px;-webkit-text-stroke:0.3px;">Inches</div>
<div class="t" style="left:656.25px;top:601px;font-size:16.5px;line-height:16.5px;color:#c2c2c2;letter-spacing:0.281px;-webkit-text-stroke:0.3px;">Resolution:</div>
<div class="t" style="left:751.77px;top:601px;font-size:16.5px;line-height:16.5px;color:#e8e8e8;letter-spacing:0.372px;-webkit-text-stroke:0.3px;">300</div>
<div class="t" style="left:901.65px;top:601px;font-size:16.5px;line-height:16.5px;color:#e8e8e8;letter-spacing:0.234px;-webkit-text-stroke:0.3px;">Pixels/Inch</div>
<div class="t" style="left:648.26px;top:640px;font-size:16.5px;line-height:16.5px;color:#c2c2c2;letter-spacing:0.347px;-webkit-text-stroke:0.3px;">Color Mode:</div>
<div class="t" style="left:757.76px;top:640px;font-size:16.5px;line-height:16.5px;color:#e8e8e8;letter-spacing:-0.064px;-webkit-text-stroke:0.3px;">CMYK Color</div>
<div class="t" style="left:909.78px;top:640px;font-size:16.5px;line-height:16.5px;color:#e8e8e8;letter-spacing:0.713px;-webkit-text-stroke:0.3px;">8 bit</div>
<div class="t" style="left:572.25px;top:692px;font-size:16.5px;line-height:16.5px;color:#c2c2c2;letter-spacing:0.321px;-webkit-text-stroke:0.3px;">Background Contents:</div>
<div class="t" style="left:758.43px;top:692px;font-size:16.5px;line-height:16.5px;color:#e8e8e8;letter-spacing:0.282px;-webkit-text-stroke:0.3px;">White</div>
<div class="t" style="left:587.57px;top:739px;font-size:16.5px;line-height:16.5px;color:#e8e8e8;letter-spacing:0.101px;-webkit-text-stroke:0.3px;">Advanced</div>
<div class="t" style="left:642.86px;top:774px;font-size:16.5px;line-height:16.5px;color:#c2c2c2;letter-spacing:0.283px;-webkit-text-stroke:0.3px;">Color Profile:</div>
<div class="t" style="left:758.43px;top:774px;font-size:16.5px;line-height:16.5px;color:#e8e8e8;letter-spacing:-0.255px;-webkit-text-stroke:0.3px;">Working CMYK:  U.S. Web Coated (...</div>
<div class="t" style="left:599.85px;top:812px;font-size:16.5px;line-height:16.5px;color:#c2c2c2;letter-spacing:0.199px;-webkit-text-stroke:0.3px;">Pixel Aspect Ratio:</div>
<div class="t" style="left:757.75px;top:812px;font-size:16.5px;line-height:16.5px;color:#e8e8e8;letter-spacing:-0.038px;-webkit-text-stroke:0.3px;">Square Pixels</div>
<div class="t" style="left:1156.52px;top:417px;font-size:16.5px;line-height:16.5px;color:#e8e8e8;letter-spacing:-0.873px;-webkit-text-stroke:0.3px;">OK</div>
<div class="t" style="left:1142.11px;top:463px;font-size:16.5px;line-height:16.5px;color:#e8e8e8;letter-spacing:0.256px;-webkit-text-stroke:0.3px;">Cancel</div>
<div class="t" style="left:1116.65px;top:510px;font-size:16.5px;line-height:16.5px;color:#e8e8e8;letter-spacing:0.033px;-webkit-text-stroke:0.3px;">Save Preset...</div>
<div class="t" style="left:1108.95px;top:557px;font-size:16.5px;line-height:16.5px;color:#7a7a7a;letter-spacing:0.343px;-webkit-text-stroke:0.3px;">Delete Preset...</div>
<div class="t" style="left:1123.63px;top:739px;font-size:16.5px;line-height:16.5px;color:#c2c2c2;letter-spacing:0.220px;-webkit-text-stroke:0.3px;">Image Size:</div>
<div class="t" style="left:1145.67px;top:770px;font-size:16.5px;line-height:16.5px;color:#c2c2c2;letter-spacing:0.093px;-webkit-text-stroke:0.3px;">48.1M</div>
</div>
</div>
</body>
</html>
